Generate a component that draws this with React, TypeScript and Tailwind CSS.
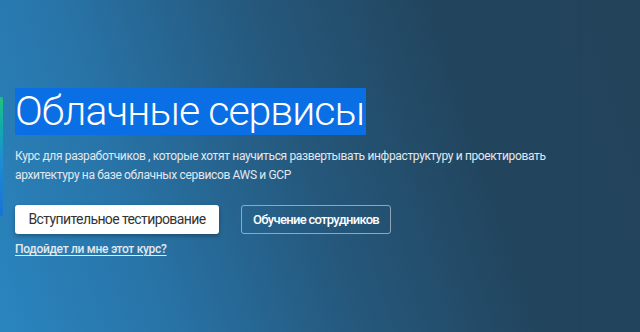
import React from "react";

export default function App() {
  return (
    <div
      className="relative w-[640px] h-[332px] overflow-hidden"
      style={{
        fontFamily: "Roboto, 'Noto Sans', sans-serif",
        background:
          "linear-gradient(72deg, #2a85bf 0%, #2874a8 22%, #25587c 48%, #22455e 72%, #22435a 100%)",
      }}
    >
      <div className="absolute left-0 top-[97px] w-[3px] h-[119px] rounded-r-[2px] bg-gradient-to-b from-[#1fc37c] via-[#1f8fd0] to-[#1a72d6]" />
      <div className="absolute left-[579px] top-0 h-full w-px bg-[#1f3f55]/60" />
      <div className="flex flex-col items-start pl-[15px] pt-[88px]">
        <h1 className="bg-[#0a6fe4] text-white text-[41px] leading-[47px] font-light tracking-[-1px] pr-[2px]">
          Облачные сервисы
        </h1>
        <p className="mt-[12px] w-[560px] text-[12px] leading-[19px] tracking-[-0.35px] text-[#e2e8ee]">
          Курс для разработчиков , которые хотят научиться развертывать инфраструктуру и проектировать архитектуру на базе облачных сервисов AWS и GCP
        </p>
        <div className="mt-[20px] flex items-center gap-[22px]">
          <button className="h-[29px] w-[204px] rounded-[3px] bg-white text-[#333] text-[14px] tracking-[-0.6px] shadow-[0_2px_4px_rgba(0,0,0,0.3)]">
            Вступительное тестирование
          </button>
          <button className="h-[29px] w-[150px] rounded-[3px] border border-[#a9bccb]/80 text-white text-[13px] font-medium tracking-[-0.7px]">
            Обучение сотрудников
          </button>
        </div>
        <a className="mt-[7px] text-[12px] leading-[16px] font-medium tracking-[-0.3px] text-[#e2e8ee] underline underline-offset-2">
          Подойдет ли мне этот курс?
        </a>
      </div>
    </div>
  );
}
